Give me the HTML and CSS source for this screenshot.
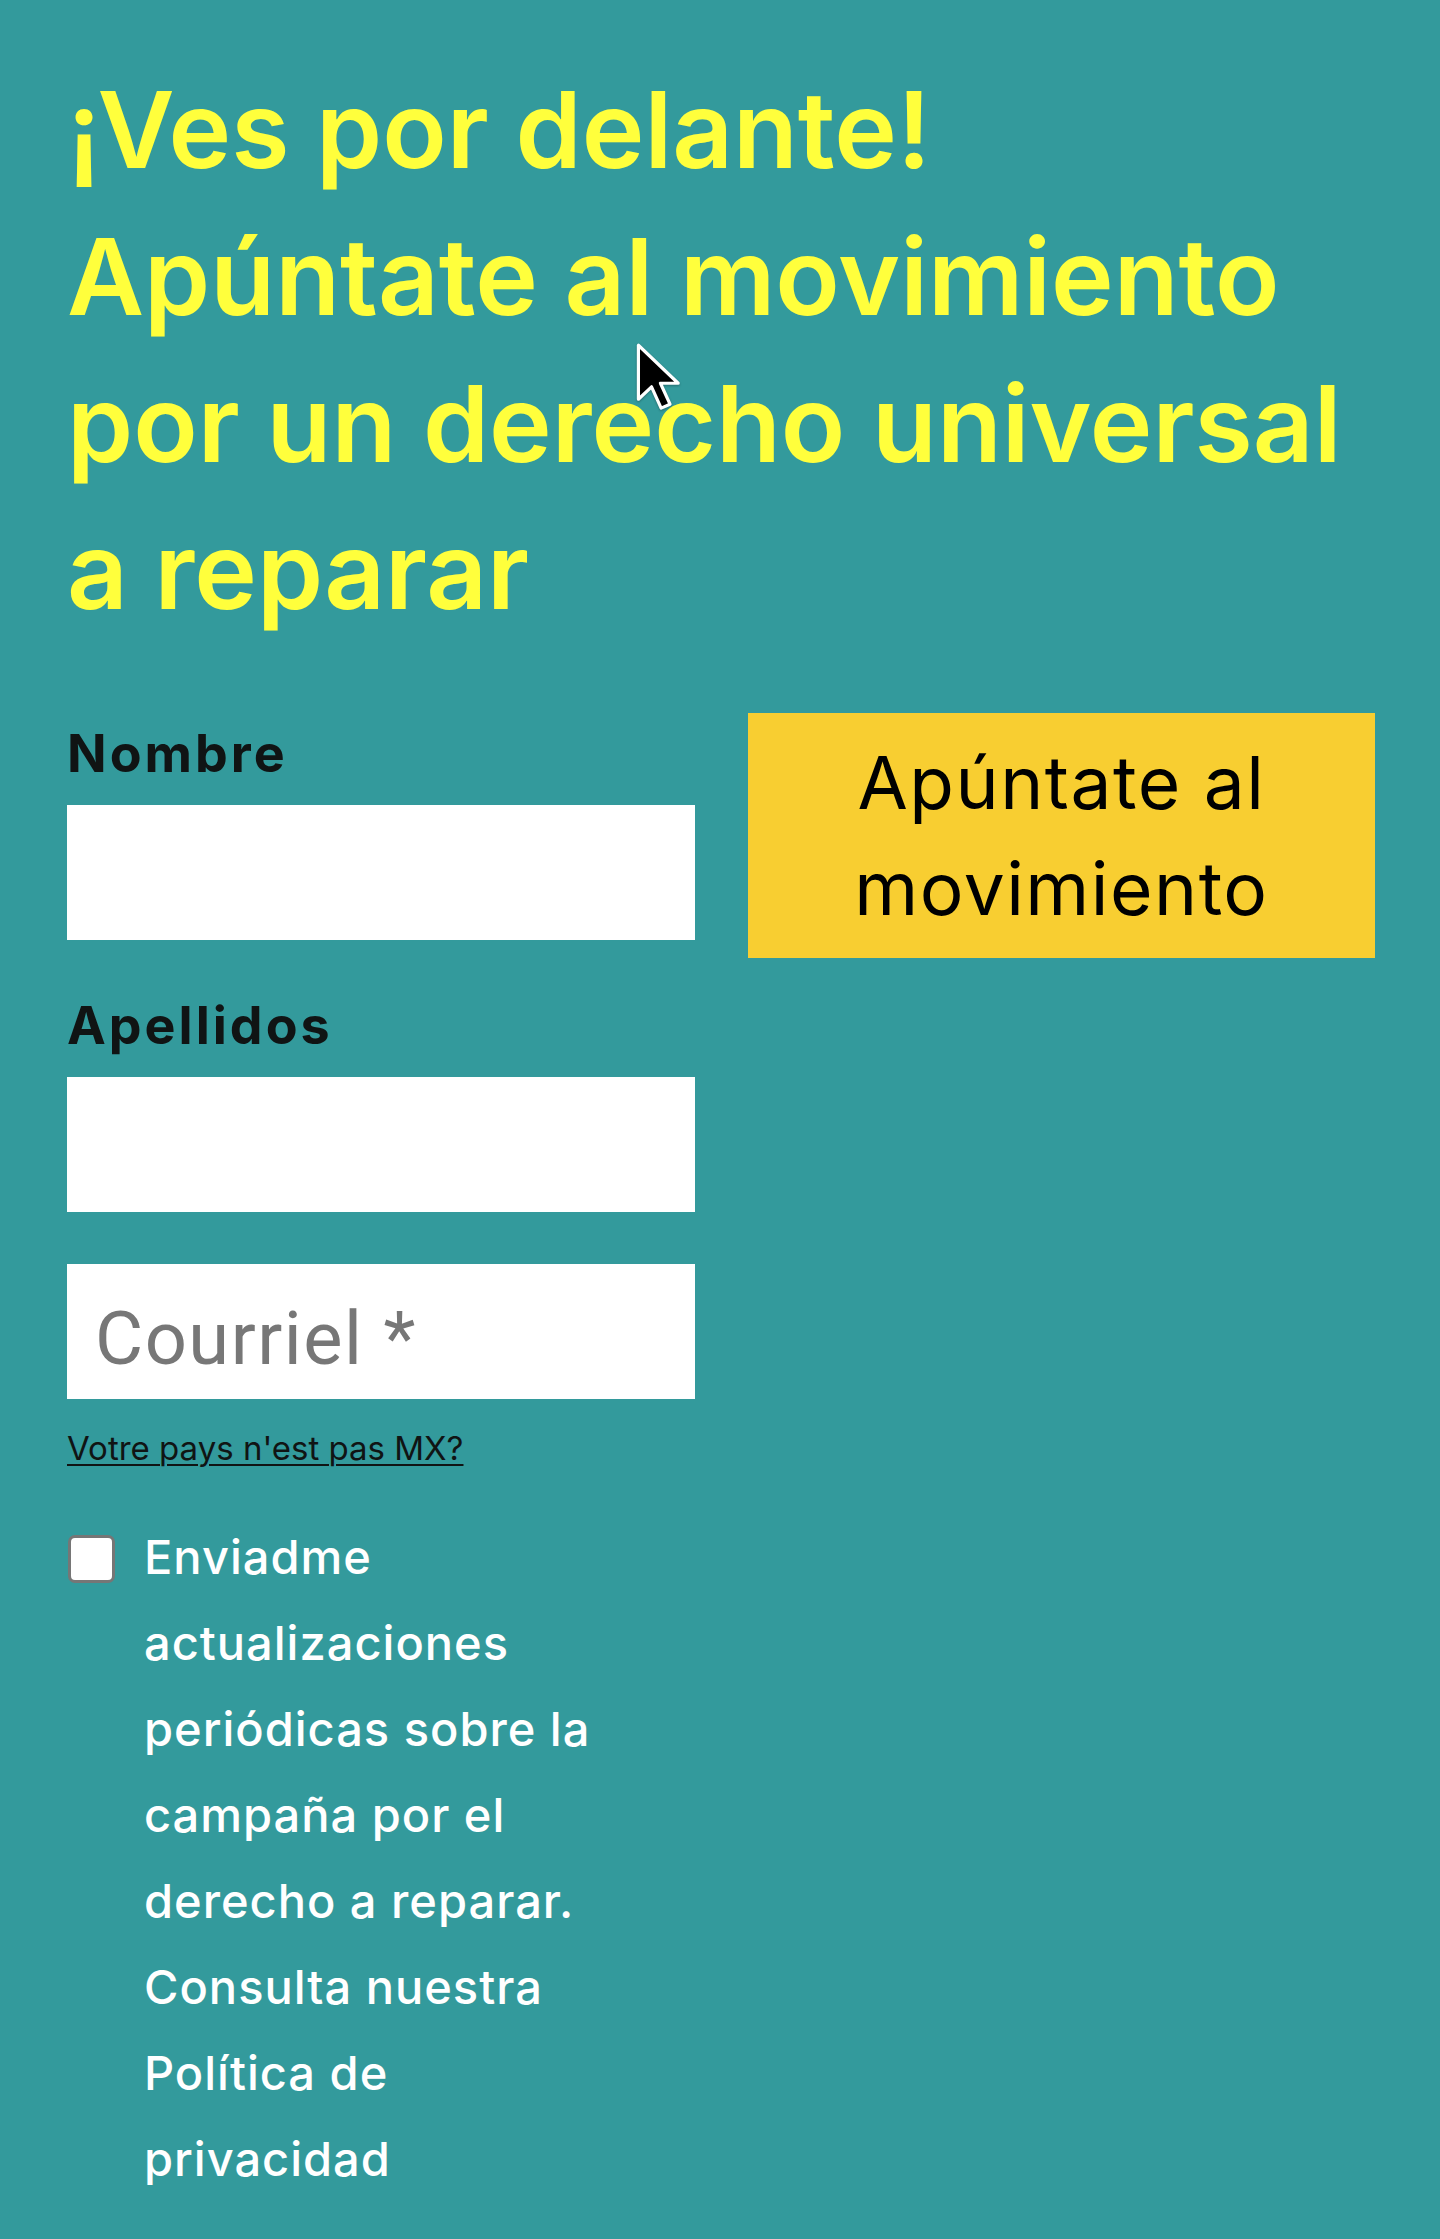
FILE: index.html
```html
<!DOCTYPE html>
<html lang="es">
<head>
<meta charset="utf-8">
<title>Derecho a reparar</title>
<link rel="stylesheet" href="styles.css">
</head>
<body>
<main class="signup">
  <h1 class="signup__title">¡Ves por delante!<br>Apúntate al movimiento por un derecho universal a reparar</h1>

  <form class="signup__grid" action="#" onsubmit="return false">
    <div class="signup__fields">
      <label class="field__label" for="first-name">Nombre</label>
      <input class="field__input" id="first-name" type="text">

      <label class="field__label field__label--second" for="last-name">Apellidos</label>
      <input class="field__input" id="last-name" type="text">

      <input class="field__input field__input--email" type="email" placeholder="Courriel *" aria-label="Courriel">

      <a class="country-link" href="#">Votre pays n'est pas MX?</a>

      <label class="optin">
        <input class="optin__box" type="checkbox">
        <span class="optin__text">Enviadme actualizaciones periódicas sobre la campaña por el derecho a reparar. Consulta nuestra Política de privacidad</span>
      </label>
    </div>

    <div class="signup__action">
      <button class="signup__button" type="submit">Apúntate al movimiento</button>
    </div>
  </form>

  <svg class="pointer" viewBox="0 0 14 20" aria-hidden="true">
    <path d="M1.2 1.2 L1.2 16.4 L4.9 12.9 L7.6 18.9 L10.1 17.8 L7.4 11.9 L12.4 11.9 Z" fill="#000" stroke="#fff" stroke-width="0.9" stroke-linejoin="round"/>
  </svg>
</main>
</body>
</html>
```

FILE: styles.css
```css
* {
  box-sizing: border-box;
}

html,
body {
  margin: 0;
  padding: 0;
}

body {
  background: #339a9c;
  font-family: "Inter", "Open Sans", sans-serif;
  color: #111;
}

.signup {
  position: relative;
  min-height: 2239px;
  padding: 56px 65px 60px 67px;
}

.signup__title {
  margin: 0;
  font-size: 106px;
  line-height: 147px;
  font-weight: 600;
  letter-spacing: 0;
  color: #ffff3c;
}

.signup__grid {
  display: grid;
  grid-template-columns: 628px 627px;
  column-gap: 53px;
  margin-top: 69px;
  align-items: start;
}

.signup__fields {
  display: flex;
  flex-direction: column;
  align-items: flex-start;
}

.field__label {
  font-size: 52px;
  line-height: 70px;
  font-weight: 700;
  letter-spacing: 3px;
  color: #101414;
  margin-top: 6px;
  margin-bottom: 16px;
}

.field__label--second {
  margin-top: 51px;
}

.field__input {
  display: block;
  width: 628px;
  height: 135px;
  border: 0;
  border-radius: 0;
  background: #fff;
  padding: 0 28px;
  font-family: "Roboto", sans-serif;
  font-size: 74px;
  letter-spacing: 1.5px;
  color: #222;
  outline: none;
}

.field__input--email {
  margin-top: 52px;
  padding-top: 14px;
}

.field__input::placeholder {
  color: #777;
}

.country-link {
  margin-top: 29px;
  font-size: 33px;
  line-height: 40px;
  color: #101414;
  text-decoration: underline;
  text-underline-offset: 4px;
  text-decoration-thickness: 2px;
}

.optin {
  display: flex;
  align-items: flex-start;
  gap: 29px;
  margin-top: 46px;
  cursor: pointer;
}

.optin__box {
  appearance: none;
  -webkit-appearance: none;
  flex: 0 0 auto;
  width: 47px;
  height: 48px;
  margin: 21px 0 0 1px;
  background: #fff;
  border: 3px solid #767676;
  border-radius: 7px;
}

.optin__text {
  max-width: 470px;
  font-size: 47px;
  line-height: 86px;
  font-weight: 500;
  letter-spacing: 1px;
  color: #fff;
}

.signup__button {
  display: block;
  width: 627px;
  height: 245px;
  border: 0;
  border-radius: 0;
  background: #f8ce31;
  padding: 16px 40px;
  font-family: "Inter", "Open Sans", sans-serif;
  font-size: 73px;
  line-height: 106px;
  font-weight: 400;
  letter-spacing: 1.5px;
  color: #000;
  text-align: center;
  cursor: pointer;
}

.pointer {
  position: absolute;
  left: 634px;
  top: 341px;
  width: 50px;
  height: 71px;
  pointer-events: none;
  filter: drop-shadow(0 1px 1px rgba(0, 0, 0, 0.3));
}
```
